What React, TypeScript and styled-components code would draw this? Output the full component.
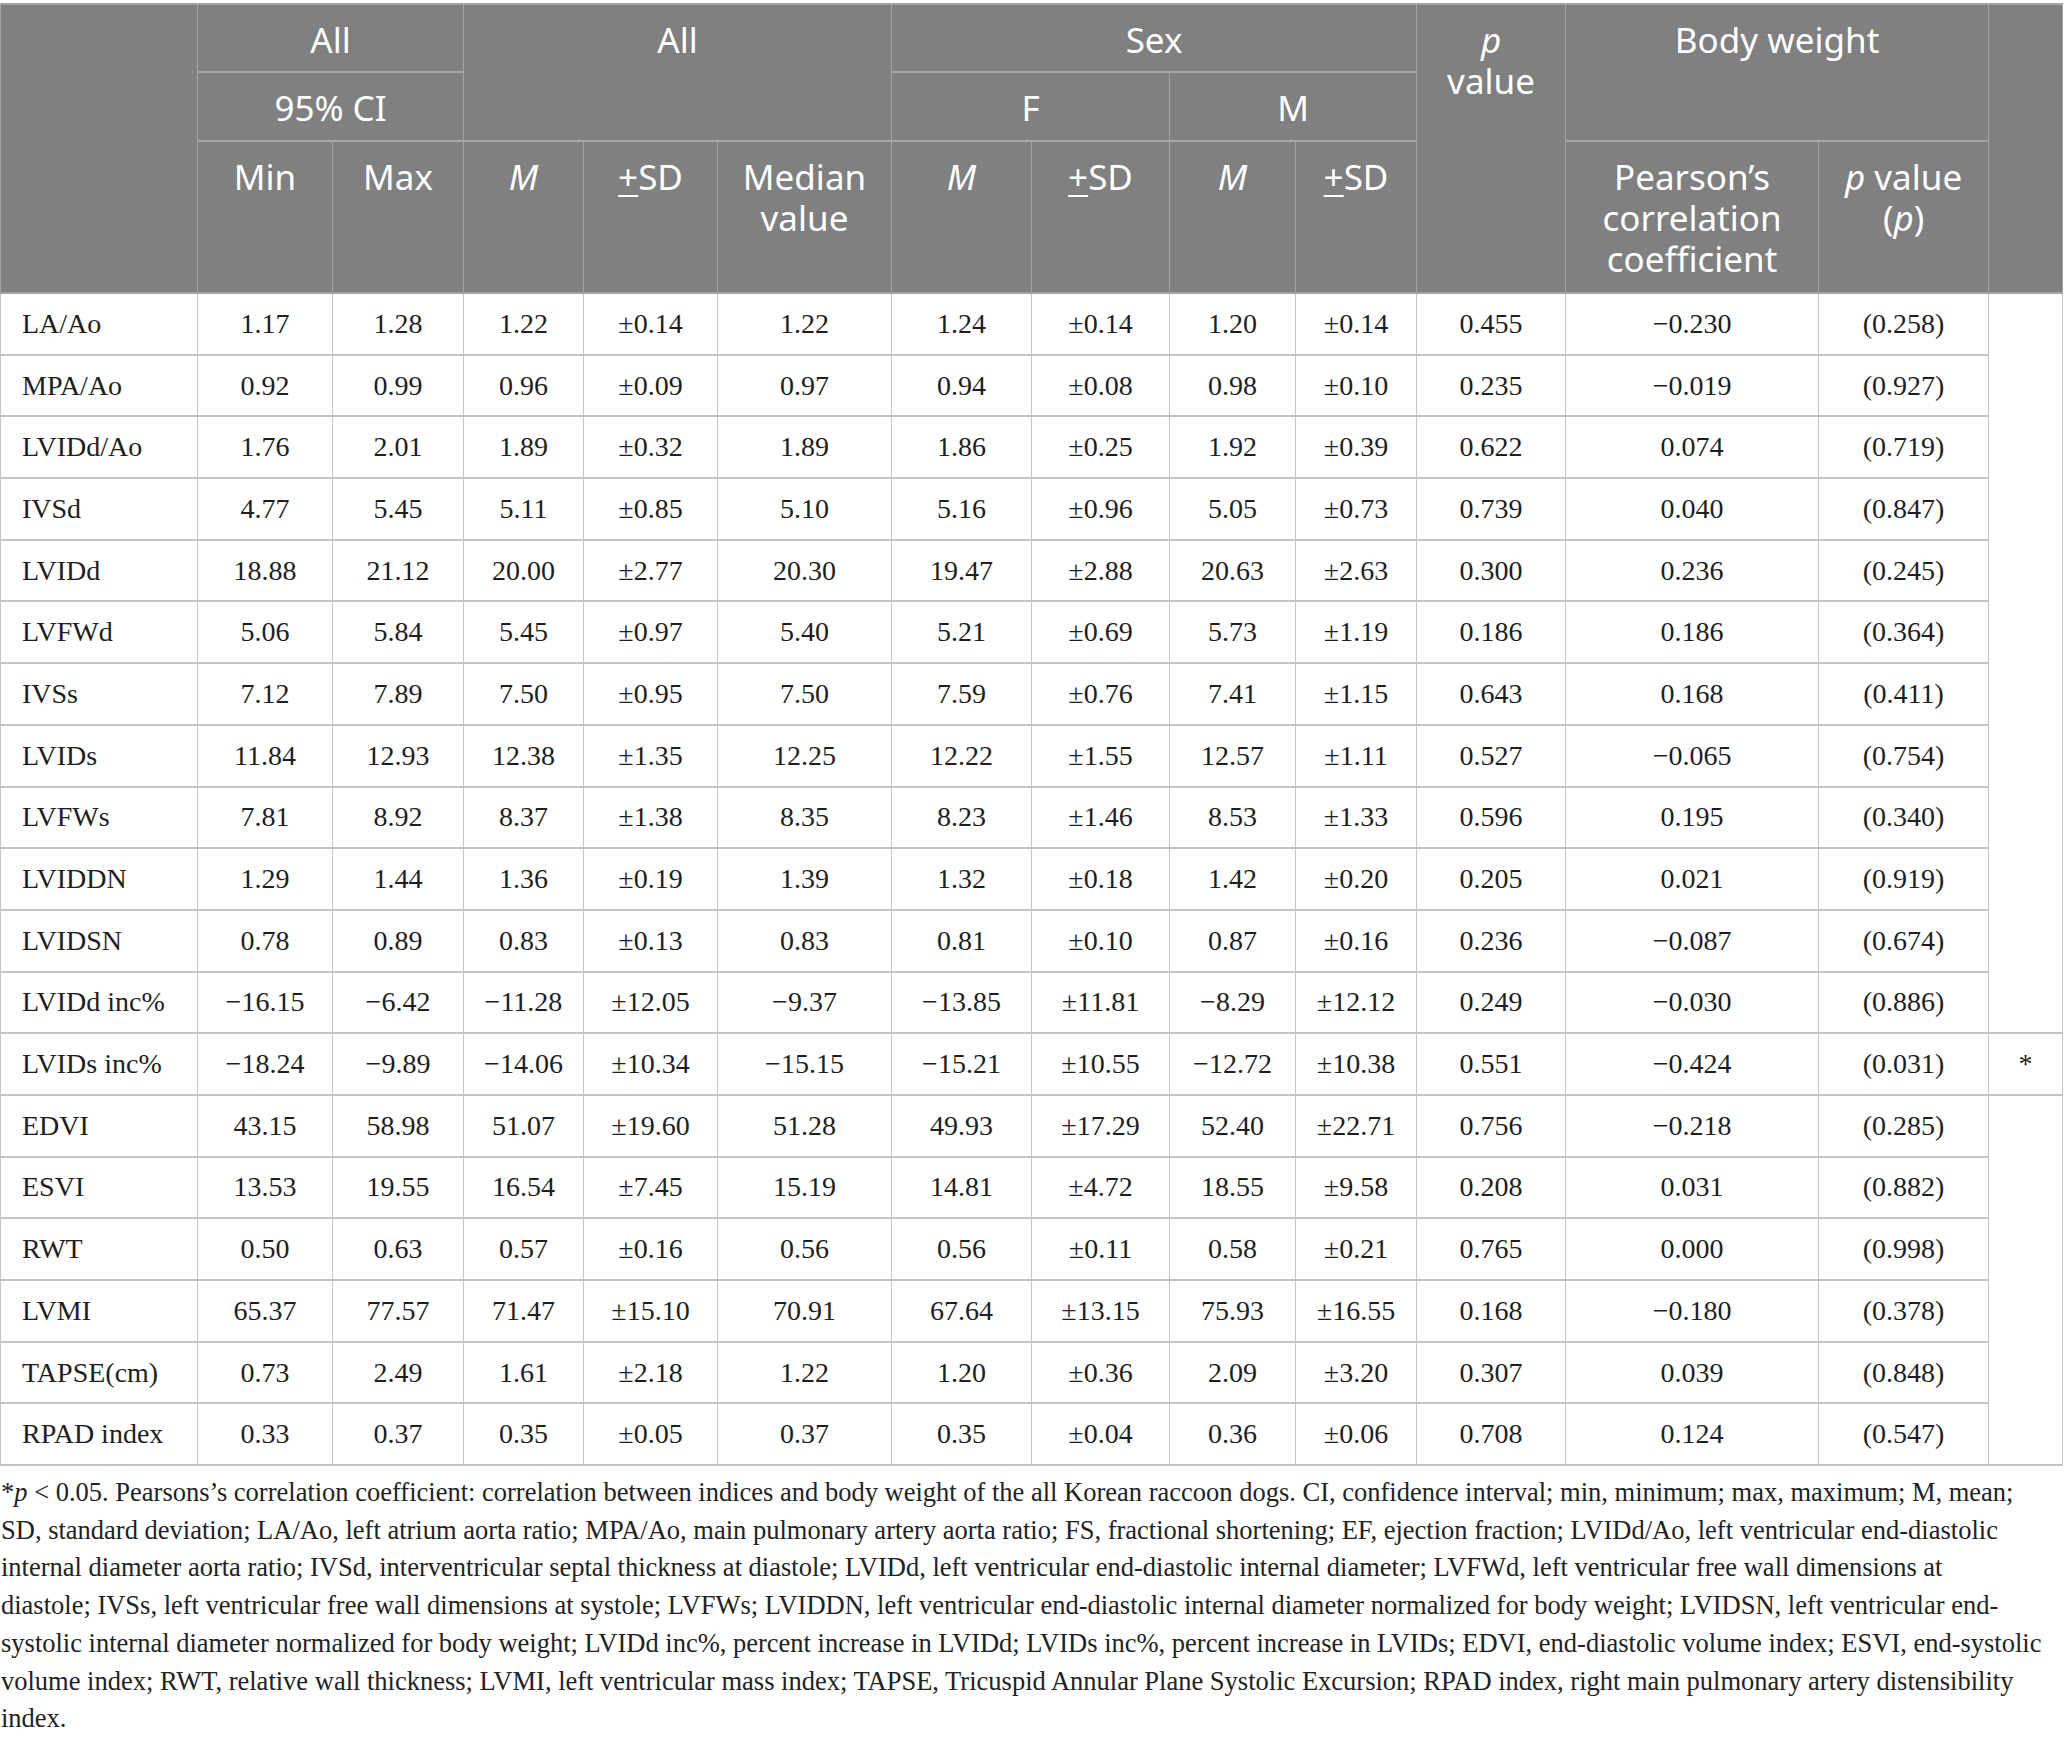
import styled, { createGlobalStyle } from "styled-components";

const GlobalStyle = createGlobalStyle`
  body {
    margin: 0;
    background: #fff;
  }
`;

const Page = styled.div`
  width: 2064px;
  padding-top: 3px;
`;

const Table = styled.table`
  width: 2062px;
  border-collapse: collapse;
  table-layout: fixed;
  border: 1px solid #bdbdbd;
  border-top: 2px solid #c2c2c2;
`;

const HeadRow = styled.tr<{ $h: number }>`
  height: ${(p) => p.$h}px;
`;

const HeadCell = styled.th`
  background: #7f807f;
  color: #fff;
  font-family: "Noto Sans", "Open Sans", sans-serif;
  font-weight: 400;
  font-size: 35px;
  line-height: 41px;
  text-align: center;
  vertical-align: top;
  padding: 14px 6px 0;
  border: 2px solid #a3a4a3;
  border-width: 2px 1px;
`;

const Em = styled.i`
  font-style: italic;
`;

const Plus = styled.span`
  text-decoration: underline;
  text-decoration-thickness: 2px;
  text-underline-offset: 5px;
`;

const BodyRow = styled.tr`
  height: 61.7px;
`;

const Cell = styled.td`
  font-family: "Liberation Serif", "Times New Roman", serif;
  font-size: 28px;
  color: #1e1e1e;
  text-align: center;
  vertical-align: middle;
  padding: 0 4px;
  border-top: 2px solid #c4c4c4;
  border-bottom: 2px solid #c4c4c4;
  border-left: 1px solid #c4c4c4;
  border-right: 1px solid #c4c4c4;
  white-space: nowrap;
`;

const LabelCell = styled(Cell)`
  text-align: left;
  padding-left: 21px;
`;

const Footnote = styled.div`
  font-family: "Liberation Serif", "Times New Roman", serif;
  font-size: 26.5px;
  line-height: 37.7px;
  color: #222;
  padding: 8px 0 0 1px;
`;

const FootLine = styled.div`
  white-space: nowrap;
`;

const widths = [197, 135, 131, 120, 134, 174, 140, 138, 126, 121, 149, 253, 170, 74];

const rows: string[][] = [
  ["LA/Ao", "1.17", "1.28", "1.22", "±0.14", "1.22", "1.24", "±0.14", "1.20", "±0.14", "0.455", "−0.230", "(0.258)"],
  ["MPA/Ao", "0.92", "0.99", "0.96", "±0.09", "0.97", "0.94", "±0.08", "0.98", "±0.10", "0.235", "−0.019", "(0.927)"],
  ["LVIDd/Ao", "1.76", "2.01", "1.89", "±0.32", "1.89", "1.86", "±0.25", "1.92", "±0.39", "0.622", "0.074", "(0.719)"],
  ["IVSd", "4.77", "5.45", "5.11", "±0.85", "5.10", "5.16", "±0.96", "5.05", "±0.73", "0.739", "0.040", "(0.847)"],
  ["LVIDd", "18.88", "21.12", "20.00", "±2.77", "20.30", "19.47", "±2.88", "20.63", "±2.63", "0.300", "0.236", "(0.245)"],
  ["LVFWd", "5.06", "5.84", "5.45", "±0.97", "5.40", "5.21", "±0.69", "5.73", "±1.19", "0.186", "0.186", "(0.364)"],
  ["IVSs", "7.12", "7.89", "7.50", "±0.95", "7.50", "7.59", "±0.76", "7.41", "±1.15", "0.643", "0.168", "(0.411)"],
  ["LVIDs", "11.84", "12.93", "12.38", "±1.35", "12.25", "12.22", "±1.55", "12.57", "±1.11", "0.527", "−0.065", "(0.754)"],
  ["LVFWs", "7.81", "8.92", "8.37", "±1.38", "8.35", "8.23", "±1.46", "8.53", "±1.33", "0.596", "0.195", "(0.340)"],
  ["LVIDDN", "1.29", "1.44", "1.36", "±0.19", "1.39", "1.32", "±0.18", "1.42", "±0.20", "0.205", "0.021", "(0.919)"],
  ["LVIDSN", "0.78", "0.89", "0.83", "±0.13", "0.83", "0.81", "±0.10", "0.87", "±0.16", "0.236", "−0.087", "(0.674)"],
  ["LVIDd inc%", "−16.15", "−6.42", "−11.28", "±12.05", "−9.37", "−13.85", "±11.81", "−8.29", "±12.12", "0.249", "−0.030", "(0.886)"],
  ["LVIDs inc%", "−18.24", "−9.89", "−14.06", "±10.34", "−15.15", "−15.21", "±10.55", "−12.72", "±10.38", "0.551", "−0.424", "(0.031)"],
  ["EDVI", "43.15", "58.98", "51.07", "±19.60", "51.28", "49.93", "±17.29", "52.40", "±22.71", "0.756", "−0.218", "(0.285)"],
  ["ESVI", "13.53", "19.55", "16.54", "±7.45", "15.19", "14.81", "±4.72", "18.55", "±9.58", "0.208", "0.031", "(0.882)"],
  ["RWT", "0.50", "0.63", "0.57", "±0.16", "0.56", "0.56", "±0.11", "0.58", "±0.21", "0.765", "0.000", "(0.998)"],
  ["LVMI", "65.37", "77.57", "71.47", "±15.10", "70.91", "67.64", "±13.15", "75.93", "±16.55", "0.168", "−0.180", "(0.378)"],
  ["TAPSE(cm)", "0.73", "2.49", "1.61", "±2.18", "1.22", "1.20", "±0.36", "2.09", "±3.20", "0.307", "0.039", "(0.848)"],
  ["RPAD index", "0.33", "0.37", "0.35", "±0.05", "0.37", "0.35", "±0.04", "0.36", "±0.06", "0.708", "0.124", "(0.547)"],
];

// the last column is merged: rows 1-12, the starred row, rows 14-19
const lastCell = (i: number) => {
  if (i === 0) return <Cell rowSpan={12} />;
  if (i === 12) return <Cell>*</Cell>;
  if (i === 13) return <Cell rowSpan={6} />;
  return null;
};

const SD = () => (
  <>
    <Plus>+</Plus>SD
  </>
);

const footLines = [
  "Pearsons’s correlation coefficient: correlation between indices and body weight of the all Korean raccoon dogs. CI, confidence interval; min, minimum; max, maximum; M, mean;",
  "SD, standard deviation; LA/Ao, left atrium aorta ratio; MPA/Ao, main pulmonary artery aorta ratio; FS, fractional shortening; EF, ejection fraction; LVIDd/Ao, left ventricular end-diastolic",
  "internal diameter aorta ratio; IVSd, interventricular septal thickness at diastole; LVIDd, left ventricular end-diastolic internal diameter; LVFWd, left ventricular free wall dimensions at",
  "diastole; IVSs, left ventricular free wall dimensions at systole; LVFWs; LVIDDN, left ventricular end-diastolic internal diameter normalized for body weight; LVIDSN, left ventricular end-",
  "systolic internal diameter normalized for body weight; LVIDd inc%, percent increase in LVIDd; LVIDs inc%, percent increase in LVIDs; EDVI, end-diastolic volume index; ESVI, end-systolic",
  "volume index; RWT, relative wall thickness; LVMI, left ventricular mass index; TAPSE, Tricuspid Annular Plane Systolic Excursion; RPAD index, right main pulmonary artery distensibility",
  "index.",
];

const App = () => {
  return (
    <Page>
      <GlobalStyle />
      <Table>
        <colgroup>
          {widths.map((w, i) => (
            <col key={i} style={{ width: w }} />
          ))}
        </colgroup>
        <thead>
          <HeadRow $h={68}>
            <HeadCell rowSpan={3} />
            <HeadCell colSpan={2}>All</HeadCell>
            <HeadCell colSpan={3} rowSpan={2}>
              All
            </HeadCell>
            <HeadCell colSpan={4}>Sex</HeadCell>
            <HeadCell rowSpan={3}>
              <Em>p</Em>
              <br />
              value
            </HeadCell>
            <HeadCell colSpan={2} rowSpan={2}>
              Body weight
            </HeadCell>
            <HeadCell rowSpan={3} />
          </HeadRow>
          <HeadRow $h={69}>
            <HeadCell colSpan={2}>95% CI</HeadCell>
            <HeadCell colSpan={2}>F</HeadCell>
            <HeadCell colSpan={2}>M</HeadCell>
          </HeadRow>
          <HeadRow $h={152}>
            <HeadCell>Min</HeadCell>
            <HeadCell>Max</HeadCell>
            <HeadCell>
              <Em>M</Em>
            </HeadCell>
            <HeadCell>
              <SD />
            </HeadCell>
            <HeadCell>
              Median
              <br />
              value
            </HeadCell>
            <HeadCell>
              <Em>M</Em>
            </HeadCell>
            <HeadCell>
              <SD />
            </HeadCell>
            <HeadCell>
              <Em>M</Em>
            </HeadCell>
            <HeadCell>
              <SD />
            </HeadCell>
            <HeadCell>
              Pearson’s
              <br />
              correlation
              <br />
              coefficient
            </HeadCell>
            <HeadCell>
              <Em>p</Em> value
              <br />(<Em>p</Em>)
            </HeadCell>
          </HeadRow>
        </thead>
        <tbody>
          {rows.map((r, i) => (
            <BodyRow key={r[0]}>
              <LabelCell>{r[0]}</LabelCell>
              {r.slice(1).map((v, j) => (
                <Cell key={j}>{v}</Cell>
              ))}
              {lastCell(i)}
            </BodyRow>
          ))}
        </tbody>
      </Table>
      <Footnote>
        <FootLine>
          *<Em>p</Em> &lt; 0.05. {footLines[0]}
        </FootLine>
        {footLines.slice(1).map((l) => (
          <FootLine key={l}>{l}</FootLine>
        ))}
      </Footnote>
    </Page>
  );
};

export default App;
